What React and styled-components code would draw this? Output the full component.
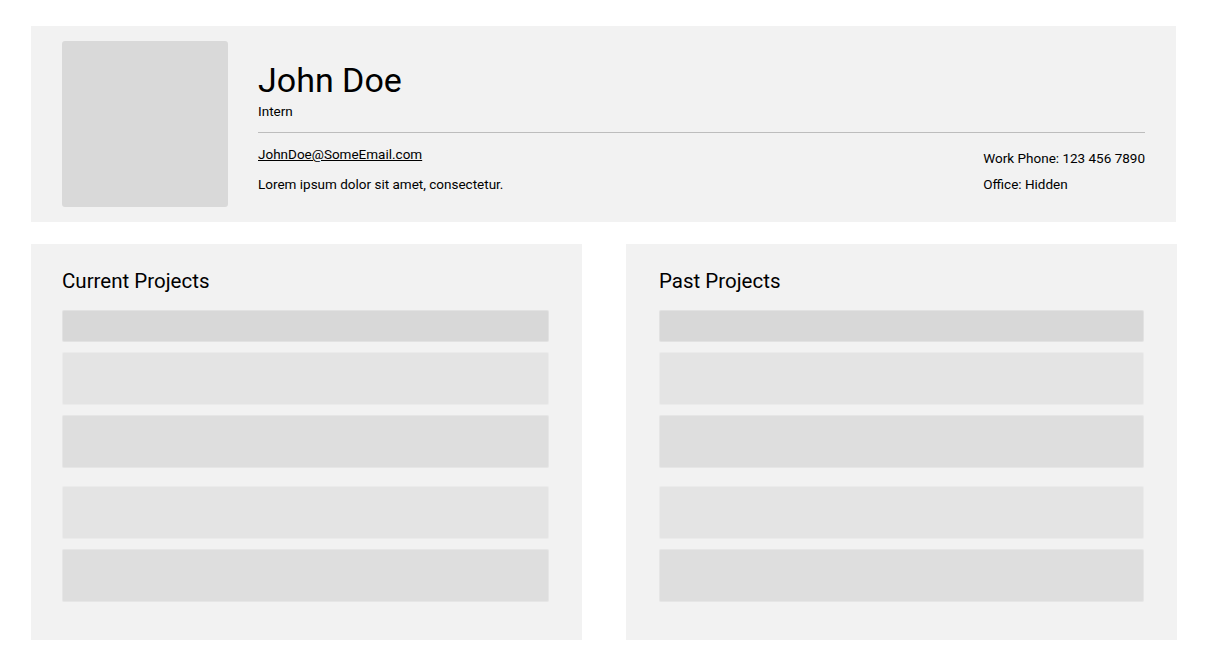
import React from 'react';
import styled, { createGlobalStyle } from 'styled-components';

const GlobalStyle = createGlobalStyle`
  body {
    margin: 0;
    background: #ffffff;
    font-family: Roboto, "Liberation Sans", sans-serif;
    color: #000;
  }
`;

const Page = styled.div`
  width: 1146px;
  padding: 26px 0 0 31px;
  display: flex;
  flex-direction: column;
  gap: 22px;
`;

const Header = styled.section`
  width: 1145px;
  height: 196px;
  box-sizing: border-box;
  background: #f2f2f2;
  padding: 15px 31px;
  display: flex;
  gap: 30px;
`;

const Avatar = styled.div`
  width: 166px;
  height: 166px;
  flex: none;
  background: #d9d9d9;
  border-radius: 3px;
`;

const Info = styled.div`
  flex: 1;
  display: flex;
  flex-direction: column;
`;

const Name = styled.h1`
  margin: 18px 0 0;
  font-size: 34px;
  font-weight: 400;
  line-height: 43px;
`;

const Role = styled.div`
  font-size: 13.5px;
  line-height: 16px;
  margin-top: 1px;
`;

const Divider = styled.hr`
  border: none;
  border-top: 1px solid #bdbdbd;
  margin: 13px 0 0;
`;

const Details = styled.div`
  display: flex;
  justify-content: space-between;
  font-size: 13.5px;
`;

const Column = styled.div`
  display: flex;
  flex-direction: column;
  gap: ${(p) => p.$gap}px;
  padding-top: ${(p) => p.$top}px;
`;

const Email = styled.a`
  color: #000;
  text-decoration: underline;
  line-height: 16px;
`;

const Line = styled.div`
  line-height: 16px;
`;

const Panels = styled.div`
  display: flex;
  gap: 44px;
`;

const Panel = styled.section`
  width: 551px;
  height: 396px;
  box-sizing: border-box;
  background: #f2f2f2;
  padding: 25px 33px 0 ${(p) => p.$left}px;
`;

const Title = styled.h2`
  margin: 0 0 17px;
  font-size: 20.5px;
  font-weight: 400;
  line-height: 24px;
`;

const List = styled.div`
  display: flex;
  flex-direction: column;
`;

const Row = styled.div`
  height: ${(p) => p.$h}px;
  margin-top: ${(p) => p.$gap}px;
  background: ${(p) => p.$bg};
  border: 1px solid rgba(255, 255, 255, 0.25);
  box-sizing: border-box;
  border-radius: 2px;
`;

const rows = [
  { h: 32, gap: 0, bg: '#d8d8d8' },
  { h: 53, gap: 10, bg: '#e4e4e4' },
  { h: 53, gap: 10, bg: '#dedede' },
  { h: 53, gap: 18, bg: '#e4e4e4' },
  { h: 53, gap: 10, bg: '#dedede' },
];

const ProjectPanel = ({ title, left }) => (
  <Panel $left={left}>
    <Title>{title}</Title>
    <List>
      {rows.map((r, i) => (
        <Row key={i} $h={r.h} $gap={r.gap} $bg={r.bg} />
      ))}
    </List>
  </Panel>
);

const App = () => {
  return (
    <>
      <GlobalStyle />
      <Page>
        <Header>
          <Avatar />
          <Info>
            <Name>John Doe</Name>
            <Role>Intern</Role>
            <Divider />
            <Details>
              <Column $top={13} $gap={14}>
                <Email href="#">JohnDoe@SomeEmail.com</Email>
                <Line>Lorem ipsum dolor sit amet, consectetur.</Line>
              </Column>
              <Column $top={17} $gap={10}>
                <Line>Work Phone: 123 456 7890</Line>
                <Line>Office: Hidden</Line>
              </Column>
            </Details>
          </Info>
        </Header>
        <Panels>
          <ProjectPanel title="Current Projects" left={31} />
          <ProjectPanel title="Past Projects" left={33} />
        </Panels>
      </Page>
    </>
  );
};

export default App;
